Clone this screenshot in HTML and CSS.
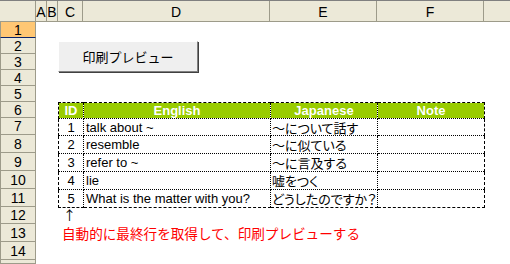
FILE: index.html
```html
<!DOCTYPE html>
<html lang="ja">
<head>
    <meta charset="UTF-8">
    <title>印刷プレビュー</title>
    <link rel="stylesheet" href="styles.css">
</head>
<body>
    <div class="sheet">
        <div class="corner"></div>
        <div class="colhead">A</div>
        <div class="colhead">B</div>
        <div class="colhead">C</div>
        <div class="colhead">D</div>
        <div class="colhead">E</div>
        <div class="colhead">F</div>
        <div class="colhead last"></div>

        <div class="rowhead active">1</div>
        <div class="rowhead">2</div>
        <div class="rowhead">3</div>
        <div class="rowhead">4</div>
        <div class="rowhead">5</div>
        <div class="rowhead">6</div>
        <div class="rowhead">7</div>
        <div class="rowhead">8</div>
        <div class="rowhead">9</div>
        <div class="rowhead">10</div>
        <div class="rowhead">11</div>
        <div class="rowhead">12</div>
        <div class="rowhead">13</div>
        <div class="rowhead">14</div>
        <div class="rowhead"></div>

        <button class="preview-btn">印刷プレビュー</button>

        <table class="words">
            <colgroup>
                <col style="width:25px">
                <col style="width:187px">
                <col style="width:107px">
                <col style="width:107px">
            </colgroup>
            <thead>
                <tr><th>ID</th><th>English</th><th>Japanese</th><th>Note</th></tr>
            </thead>
            <tbody>
                <tr class="r7"><td class="id">1</td><td>talk about ~</td><td class="ja">～について話す</td><td></td></tr>
                <tr><td class="id">2</td><td>resemble</td><td class="ja">～に似ている</td><td></td></tr>
                <tr><td class="id">3</td><td>refer to ~</td><td class="ja">～に言及する</td><td></td></tr>
                <tr><td class="id">4</td><td>lie</td><td class="ja">嘘をつく</td><td></td></tr>
                <tr><td class="id">5</td><td>What is the matter with you?</td><td class="ja">どうしたのですか？</td><td></td></tr>
            </tbody>
        </table>

        <div class="arrow">↑</div>
        <div class="note">自動的に最終行を取得して、印刷プレビューする</div>
    </div>
</body>
</html>
```

FILE: styles.css
```css
* {
    box-sizing: border-box;
}
body {
    margin: 0;
    background: #fff;
    font-family: "Liberation Sans", "Noto Sans CJK JP", sans-serif;
    font-size: 13px;
    overflow: hidden;
}
.sheet {
    display: grid;
    grid-template-columns: 36px 11px 11px 25px 187px 107px 107px 1fr;
    grid-template-rows: 21px 16px 16px 16px 16px 16px 16px 17px 18px 18px 18px 18px 17px 18px 18px 1fr;
    width: 510px;
    height: 264px;
    border-top: 1px solid #808080;
}
.corner,
.colhead {
    background: #ece9d8;
    border-right: 1px solid #9d9b8a;
    border-bottom: 1px solid #9d9b8a;
}
.colhead {
    display: flex;
    align-items: center;
    justify-content: center;
    padding-top: 1px;
    font-size: 14px;
    line-height: 1;
}
.colhead.last {
    border-right: none;
}
.rowhead {
    grid-column: 1;
    display: flex;
    align-items: center;
    justify-content: center;
    background: #ece9d8;
    border-left: 1px solid #9d9b8a;
    border-right: 1px solid #9d9b8a;
    border-bottom: 1px solid #9d9b8a;
    font-size: 14px;
    line-height: 1;
}
.rowhead.active {
    background: #ffc774;
    border-bottom-color: #0a246a;
}
.preview-btn {
    grid-column: 4 / span 2;
    grid-row: 3 / span 3;
    align-self: start;
    justify-self: start;
    margin-top: 3px;
    width: 140px;
    height: 31px;
    padding: 0;
    background: #efefef;
    border: 1px solid;
    border-color: #fff #808080 #808080 #fff;
    box-shadow: 1px 1px 0 #404040;
    font-family: "Noto Sans CJK JP", sans-serif;
    font-size: 13px;
    color: #000;
}
.words {
    grid-column: 4 / span 4;
    grid-row: 7 / span 6;
    border-collapse: collapse;
    table-layout: fixed;
    width: 426px;
    height: 105px;
    border: 1px dashed #000;
}
.words th,
.words td {
    padding: 0 2px;
    border: 1px dotted #000;
    white-space: nowrap;
    overflow: hidden;
    line-height: 1;
    font-size: 13px;
}
.words th {
    height: 16px;
    background: #99cc00;
    color: #fff;
    font-weight: bold;
    text-align: center;
    border-top: 1px dashed #000;
}
.words th:first-child,
.words td:first-child {
    border-left: 1px dashed #000;
}
.words th:last-child,
.words td:last-child {
    border-right: 1px dashed #000;
}
.words tbody tr:last-child td {
    border-bottom: 1px dashed #000;
}
.words td {
    height: 18px;
}
.words tr.r7 td {
    height: 17px;
}
.words td.id {
    text-align: center;
}
.words td.ja {
    padding: 0 0 0 1px;
    font-family: "Noto Sans CJK JP", sans-serif;
    font-feature-settings: "palt";
}
.arrow {
    grid-column: 4;
    grid-row: 13;
    padding-left: 5px;
    font-family: "Noto Sans CJK JP", sans-serif;
    font-size: 13px;
    line-height: 15px;
    height: 15px;
}
.note {
    grid-column: 4 / span 4;
    grid-row: 14;
    padding-left: 4px;
    color: #ff0000;
    font-family: "Noto Sans CJK JP", sans-serif;
    font-size: 13.6px;
    line-height: 18px;
    white-space: nowrap;
}
```
